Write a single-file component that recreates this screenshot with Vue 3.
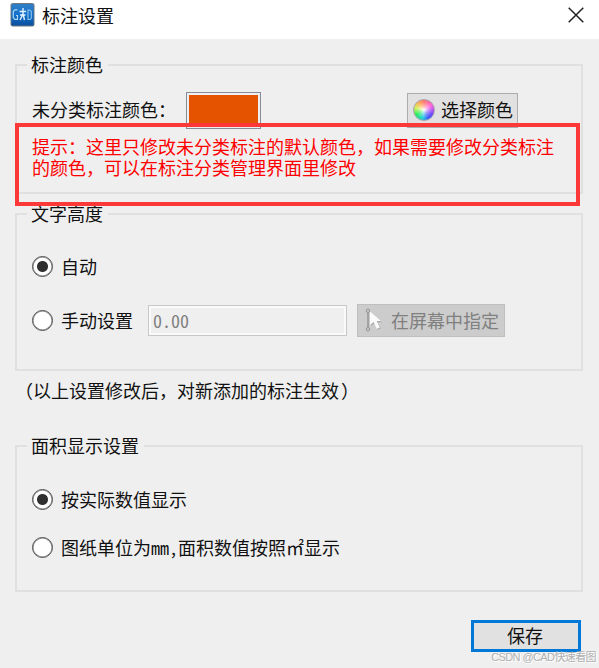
<template>
  <div class="dialog">
    <header class="title-bar">
      <svg class="app-icon" viewBox="0 0 24 24">
        <defs>
          <linearGradient id="logo" x1="0" y1="0" x2="0" y2="1">
            <stop offset="0" stop-color="#347fc4" />
            <stop offset="0.5" stop-color="#1170cc" />
            <stop offset="1" stop-color="#0a4f9c" />
          </linearGradient>
        </defs>
        <rect x="0.5" y="0.5" width="23" height="22.5" rx="1.5" fill="url(#logo)" stroke="#6b7783" />
        <path d="M7 6.8H4.3L2.8 8.5V14.5L4.2 16.3H7V12.5H5.5" fill="none" stroke="#a9d5f5" stroke-width="1.2" />
        <path d="M9.5 17L12.5 11V5M9 8.5H15.5M9.5 12H15M12.5 11L14 17" fill="none" stroke="#e1f2ff" stroke-width="1.4" />
        <path d="M17.5 7H19.5L20.8 8.5V15L19.5 16.5H17.5Z" fill="none" stroke="#8fc6ee" stroke-width="1.1" />
      </svg>
      <span class="title">标注设置</span>
      <svg class="close" viewBox="0 0 16 16">
        <path d="M0.7 0.7L15.3 15.3M15.3 0.7L0.7 15.3" stroke="#222" stroke-width="1.5" />
      </svg>
    </header>

    <main class="content">
      <fieldset class="group color-group">
        <legend><span>标注颜色</span></legend>
        <div class="color-row">
          <span class="color-label">未分类标注颜色：</span>
          <div class="swatch"></div>
          <button class="btn pick-color">
            <span class="wheel"></span>
            <span class="btn-text">选择颜色</span>
          </button>
        </div>
        <p class="hint">提示：这里只修改未分类标注的默认颜色，如果需要修改分类标注<br />的颜色，可以在标注分类管理界面里修改</p>
      </fieldset>

      <fieldset class="group height-group">
        <legend><span>文字高度</span></legend>
        <div class="option" @click="heightMode = 'auto'">
          <i class="radio" :class="{ checked: heightMode === 'auto' }"></i>
          <span>自动</span>
        </div>
        <div class="option manual" @click="heightMode = 'manual'">
          <i class="radio" :class="{ checked: heightMode === 'manual' }"></i>
          <span>手动设置</span>
          <input class="height-input" value="0.00" disabled />
          <button class="btn pick-screen" disabled>
            <svg class="cursor-icon" viewBox="0 0 18 24">
              <path d="M3 3V21" stroke="#858585" stroke-width="1.2" />
              <circle cx="3" cy="2.7" r="1.7" fill="#ccc" stroke="#929292" />
              <circle cx="3" cy="21.3" r="1.7" fill="#ccc" stroke="#929292" />
              <path d="M6 5.5V18L9.4 15.3L12.5 22L15.7 20.6L12.7 14.2H17Z" fill="#aaa" />
              <path d="M5 3.5V17L8.6 14L11.8 21L14.8 19.5L11.7 13H16Z" fill="#fafafa" />
            </svg>
            <span>在屏幕中指定</span>
          </button>
        </div>
      </fieldset>

      <p class="note">（以上设置修改后，对新添加的标注生效<span class="paren">）</span></p>

      <fieldset class="group area-group">
        <legend><span>面积显示设置</span></legend>
        <div
          v-for="item in areaOptions"
          :key="item.id"
          class="option"
          @click="areaMode = item.id"
        >
          <i class="radio" :class="{ checked: areaMode === item.id }"></i>
          <span class="option-text">{{ item.label }}</span>
        </div>
      </fieldset>

      <button class="save">保存</button>
    </main>

    <div class="highlight"></div>
    <div class="watermark">CSDN @CAD快速看图</div>
  </div>
</template>

<script setup>
import { ref } from 'vue'

const heightMode = ref('auto')
const areaMode = ref('actual')

const areaOptions = [
  { id: 'actual', label: '按实际数值显示' },
  { id: 'meter', label: '图纸单位为mm,面积数值按照㎡显示' }
]
</script>

<style>
body {
  margin: 0;
  overflow: hidden;
}
</style>

<style scoped>
.dialog {
  position: relative;
  width: 599px;
  height: 668px;
  overflow: hidden;
  background: #efefef;
  color: #111;
  font-family: 'Noto Sans CJK SC', sans-serif;
  font-size: 18px;
  line-height: 20px;
  white-space: nowrap;
}

.dialog * {
  box-sizing: border-box;
}

.title-bar {
  display: flex;
  align-items: flex-start;
  height: 39px;
  padding: 3px 15px 0 10px;
  background: #fff;
}

.app-icon {
  width: 25px;
  height: 24px;
}

.title {
  margin: 2px 0 0 7px;
}

.close {
  width: 16px;
  height: 16px;
  margin: 4px 0 0 auto;
}

.content {
  display: flex;
  flex-direction: column;
  padding: 16px 16px 0 15px;
}

.group {
  min-width: 0;
  margin: 0;
  padding: 0 0 0 10px;
  border: 2px solid #e0e0e0;
}

.group legend {
  height: 20px;
  padding: 0 5px 0 4px;
  line-height: 18px;
}

.color-group {
  height: 139px;
}

.height-group {
  height: 167px;
  margin-top: 10px;
}

.area-group {
  height: 156px;
  margin-top: 36px;
}

.color-row {
  display: flex;
  align-items: center;
  height: 37px;
  margin-top: 17px;
  padding-left: 5px;
}

.color-label {
  width: 154px;
  padding-bottom: 3px;
}

.swatch {
  width: 75px;
  height: 37px;
  border: 1px solid #858b98;
  background: #e65300;
  box-shadow: inset 0 0 0 2px #efefef;
}

.btn {
  display: flex;
  align-items: center;
  padding: 0;
  border: 1px solid #adadad;
  background: #e1e1e1;
  color: inherit;
  font: inherit;
}

.pick-color {
  width: 111px;
  height: 35px;
  margin-left: 146px;
  padding: 0 0 2px 5px;
  gap: 6px;
}

.btn-text {
  padding-bottom: 1px;
}

.wheel {
  width: 22px;
  height: 22px;
  border: 1px solid #a9a2ad;
  border-radius: 50%;
  background:
    radial-gradient(circle, #fff 0, rgba(255, 255, 255, 0.4) 30%, transparent 60%),
    conic-gradient(#ff786b, #ff62e0 60deg, #6848ff 120deg, #3c5cff 150deg, #22d0dc 190deg, #26ed58 240deg, #d9f05a 285deg, #ffab56 325deg, #ff786b);
}

.hint {
  margin: 7px 0 0 5px;
  color: #f00;
  line-height: 21px;
}

.option {
  display: flex;
  align-items: center;
  height: 34px;
  padding-left: 5px;
}

.radio {
  width: 21px;
  height: 21px;
  margin-right: 8px;
  border: 1.5px solid #4b4b4b;
  border-radius: 50%;
  background: #fff;
  box-shadow: inset 0 0 0 0.5px #777;
}

.radio.checked {
  background: radial-gradient(circle, #303030 5px, #fff 6px);
}

.height-group .option {
  margin-top: 25px;
}

.height-group .option.manual {
  margin-top: 20px;
}

.height-input {
  width: 199px;
  height: 31px;
  margin-left: 15px;
  padding: 0 0 0 4px;
  border: 1px solid #c8c8c8;
  background: #efefef;
  box-shadow: inset 0 0 0 2px #fafafa;
  color: #808080;
  font: inherit;
  font-feature-settings: 'hwid';
}

.pick-screen {
  width: 148px;
  height: 33px;
  margin-left: 10px;
  padding-left: 7px;
  gap: 8px;
  border-color: #bfbfbf;
  background: #ccc;
  color: #808080;
}

.cursor-icon {
  width: 18px;
  height: 24px;
}

.note {
  margin: 9px 0 0;
}

.paren {
  margin-left: 2px;
}

.area-group .option:nth-of-type(1) {
  margin-top: 26px;
}

.area-group .option + .option {
  margin-top: 14px;
}

.option-text {
  font-feature-settings: 'hwid';
}

.save {
  align-self: flex-end;
  width: 110px;
  height: 32px;
  margin: 28px 2px 0 0;
  padding: 0 2px 3px 0;
  border: 3px solid #0078d7;
  background: #e1e1e1;
  color: #111;
  font: inherit;
}

/* annotation frame lies over the swatch row and the hint */
.highlight {
  position: absolute;
  top: 123px;
  left: 15px;
  width: 565px;
  height: 83px;
  border: 4px solid #fc3838;
}

.watermark {
  position: absolute;
  right: 3px;
  bottom: 2px;
  color: #b0b0b0;
  font-family: 'Liberation Sans', 'Noto Sans CJK SC', sans-serif;
  font-size: 11px;
  letter-spacing: -0.6px;
  line-height: 18px;
  text-shadow: 1px 1px 0 #fff;
}
</style>
